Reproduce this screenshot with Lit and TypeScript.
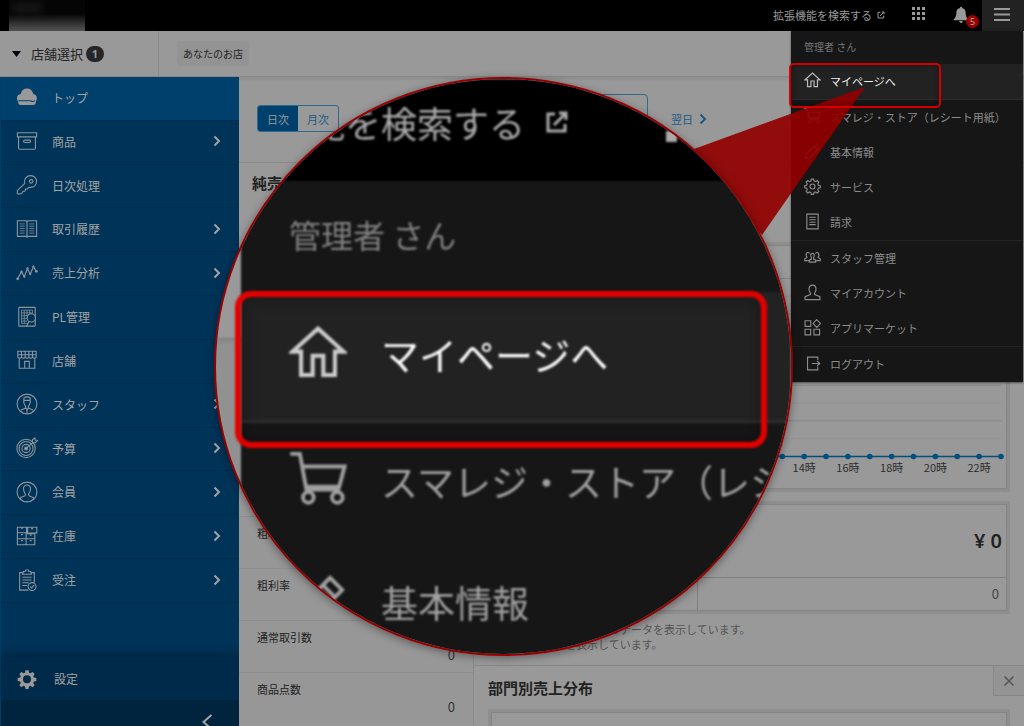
import { LitElement, html, css, svg } from "lit";
import { customElement } from "lit/decorators.js";

const sideIcons: Record<string, unknown> = {
  cloud: svg`<path fill="currentColor" stroke="none" d="M2 16.500C-.2 13 1.500 9 5.200 8.800 6 4.500 9 2.800 12 2.800s6 1.800 6.800 5.800C22.800 9 23.800 13.500 21.800 16.500z"/><path d="M3 16.300h18v1.800q0 2-2 2H5q-2 0-2-2z" fill="currentColor"/><path d="M2.500 16h13.500q2 2 4.500 0" stroke="#00406d" stroke-width="1.100"/>`,
  box: svg`<path d="M1.500 3h21v4.500h-21zM2.800 7.500h18.400V20q0 1-1 1H3.800q-1 0-1-1z"/><rect x="8.200" y="11" width="7.600" height="2.600" rx="1.300"/>`,
  key: svg`<circle cx="16.500" cy="8" r="1.900"/><path d="M9.400 10.500C8.400 5.500 11.500 1.800 16 1.800c4 0 6.500 3 6.500 6.200 0 4.500-3.700 7.400-8.200 6.400l-2 1.800-2 .2-.4 2.300-2.400.4-1.200 2.200-3.800.6-1.200-1 .3-3z"/>`,
  book: svg`<path d="M12 4v17.500M1.500 3h9.500l1 1 1-1h9.500v17H13l-1 1-1-1H1.500z"/><path d="M4 6.500h5.500M4 9h5.500M4 11.500h5.500M4 14h5.500M4 16.500h5.500M14.500 6.500H20M14.500 9H20M14.500 11.500H20M14.500 14H20M14.500 16.500H20" stroke-width=".8"/>`,
  graph: svg`<path d="M2 18l4-7.500 3 5.500 3.500-9 3 6.500L19 5l3 5" stroke-width="1.300"/><g fill="currentColor" stroke="none"><circle cx="1.800" cy="18.300" r="1.500"/><circle cx="6" cy="10.500" r="1.200"/><circle cx="9" cy="16" r="1.200"/><circle cx="12.500" cy="7" r="1.200"/><circle cx="15.500" cy="13" r="1.200"/><circle cx="19" cy="5" r="1.200"/><circle cx="22.200" cy="10.200" r="1.500"/></g>`,
  sheet: svg`<rect x="3" y="1.500" width="18" height="20.500" rx=".8"/><path d="M6 4.500h12M6 4.500V19M6 7.500h12M6 10.500h8M6 13.500h6M6 16.500h6M6 19h7M9 4.500V19M12 4.500v7M15 4.500v5M18 4.500V8" stroke-width=".8"/><circle cx="16.700" cy="13" r="4.500" fill="#003358"/><path d="M14.200 17l-3 5.500"/>`,
  shop: svg`<path d="M2 2.500h20v3.800H2zM2 6.300v2.900q2 1.600 4 0 2 1.600 4 0 2 1.600 4 0 2 1.600 4 0 2 1.600 4 0V6.300M6 2.500v6.700M10 2.500v6.700M14 2.500v6.700M18 2.500v6.700M3.500 10.200V21h17V10.200M9.500 21v-7.500h5V21"/>`,
  staff: svg`<circle cx="12" cy="12" r="10.800"/><path d="M8.500 5.500q3.500-2.500 7 0v4.800q-.8 3.200-2 4.200v1.800l5.300 2.500M8.500 5.500v4.800q.8 3.200 2 4.200v1.800l-5.300 2.500M8.500 8h7M10.500 16.300l1.500 2 1.500-2M12 18.500V22"/>`,
  target: svg`<circle cx="11" cy="12.500" r="10"/><circle cx="11" cy="12.500" r="7.600"/><circle cx="11" cy="12.500" r="4.500"/><circle cx="11" cy="12.500" r="1.500" fill="currentColor"/><path d="M11 12.500l8-7M18 6V3l2.500-2 .4 2.400 2.600.4L21 6.500z"/>`,
  member: svg`<circle cx="12" cy="12" r="10.800"/><path d="M5 20v-2l4.800-2q1-.6.2-2Q8 11 8.200 7.800 8.600 4.300 12 4.300t3.800 3.500Q16 11 14 14q-.8 1.400.2 2l4.800 2v2"/>`,
  stock: svg`<path d="M1.500 2.500h10v6h-10zM1.500 8.500h9.500v6.500H1.500zM1.500 15h9.500v6.500H1.500zM11 15h9.500v6.500H11zM11 9.500h9.500V15H11zM12.700 2.500h10v6.200h-10zM5.500 3.500h2M5.500 10.500h2M5.500 17h2M15 17h2M15 11h2M16.500 4h2"/>`,
  order: svg`<path d="M8 4H4v19h9.500M16 4h4v11M8 2.800h2Q10.200.8 12 .8t2 2h2l.8 3H7.200zM7 9h10M7 12h10M7 15h7M7 18h5"/><circle cx="17.500" cy="19.200" r="4.300"/><path d="M15.500 19.200l1.500 1.500 2.700-3"/>`,
  gear: svg`<path fill="currentColor" stroke="none" fill-rule="evenodd" d="M10.200 1.500h3.600l.6 3 1.700.7 2.600-1.700 2.500 2.500-1.700 2.600.7 1.700 3 .6v3.600l-3 .6-.7 1.700 1.700 2.600-2.500 2.500-2.600-1.700-1.700.7-.6 3h-3.600l-.6-3-1.700-.7-2.600 1.700-2.500-2.500 1.700-2.600-.7-1.700-3-.6v-3.600l3-.6.7-1.700-1.700-2.600 2.500-2.500 2.600 1.700 1.700-.7zM12 7.600a4.800 4.800 0 1 0 0 9.600 4.800 4.800 0 0 0 0-9.600z"/>`,
};

const menuIcons: Record<string, unknown> = {
  home: svg`<path d="M1.500 11L12 1.500 22.500 11h-3.500v9.700h-4.800v-8H9.800v8H5V11z" stroke-width="1.700"/>`,
  cart: svg`<path d="M.5 .8h4L7.200 15.500h14M6 6h17l-2.200 8.300H7"/><circle cx="8" cy="18.800" r="2.200"/><circle cx="20" cy="18.800" r="2.200"/>`,
  pencil: svg`<path d="M2 22l1.500-6.500L17 2l5 5L8.500 20.500zM14 5l5 5"/>`,
  cog: svg`<circle cx="12" cy="12" r="3.500"/><path d="M10.300 1.500h3.400l.6 2.800 2 .8 2.400-1.600 2.300 2.300-1.500 2.400.8 2 2.700.6v3l-2.700.7-.8 2 1.500 2.400-2.300 2.300-2.400-1.600-2 .8-.6 2.700h-3.400l-.6-2.700-2-.8-2.400 1.600L3 18.900l1.500-2.400-.8-2-2.700-.7v-3l2.700-.6.8-2L3 5.800l2.300-2.300 2.400 1.600 2-.8z"/>`,
  bill: svg`<path d="M4 1.500h16v21H4zM7.500 6h9M7.500 9.500h9M7.500 13h9M7.500 16.500h9"/>`,
  group: svg`<path d="M7.500 18.500v-2.700l3-1.500V12q-1-1.200-1-3 0-3 2.500-3T14.500 9q0 1.800-1 3v2.300l3 1.500v2.700zM7 16.500H1v-2.700l3-1.500v-1q-1-1-1-3Q3.200 5 5.500 5q1.800 0 2.300 1.400M17 16.500h6v-2.700l-3-1.500v-1q1-1 1-3Q20.800 5 18.500 5q-1.800 0-2.300 1.400"/>`,
  person: svg`<path d="M1.500 22v-4l7.500-3q.8-1 0-2-2-2.500-2-6 .3-5.500 5-5.500t5 5.500q0 3.500-2 6-.8 1 0 2l7.500 3v4z"/>`,
  apps: svg`<path d="M1.500 2.500h8v8h-8zM1.500 14.500h8v8h-8zM14 14.500h8v8h-8zM18 .8l5.300 5.500L18 11.800l-5.300-5.500z"/>`,
  exit: svg`<path d="M19.500 7V3H5v18h14.500v-4M11 12h11M18.500 8.200l3.700 3.800-3.700 3.800"/>`,
};

const icon = (shape: unknown, cls: string, stroke = "1.200") =>
  html`<svg class=${cls} viewBox="0 0 24 24" fill="none" stroke="currentColor" stroke-width=${stroke} aria-hidden="true">${shape}</svg>`;

const sideItems: [string, string, boolean][] = [
  ["cloud", "トップ", false],
  ["box", "商品", true],
  ["key", "日次処理", false],
  ["book", "取引履歴", true],
  ["graph", "売上分析", true],
  ["sheet", "PL管理", false],
  ["shop", "店舗", false],
  ["staff", "スタッフ", true],
  ["target", "予算", true],
  ["member", "会員", true],
  ["stock", "在庫", true],
  ["order", "受注", true],
];

const menuGroups: [string, string][][] = [
  [
    ["cart", "スマレジ・ストア（レシート用紙）"],
    ["pencil", "基本情報"],
    ["cog", "サービス"],
    ["bill", "請求"],
  ],
  [
    ["group", "スタッフ管理"],
    ["person", "マイアカウント"],
    ["apps", "アプリマーケット"],
  ],
  [["exit", "ログアウト"]],
];

const extShape = svg`<path d="M10 4H3v17h17v-7M9 15L20 4M14 3h7v7" stroke-width="3"/>`;

@customElement("app-root")
export class AppRoot extends LitElement {
  static styles = css`
    :host {
      display: block;
      font-family: "Noto Sans CJK JP", "Noto Sans", sans-serif;
      font-size: 11px;
      color: #222;
    }
    * { box-sizing: border-box; }
    a { color: inherit; text-decoration: none; }
    button { font: inherit; color: inherit; background: none; border: 0; padding: 0; margin: 0; }
    ul, dl, dd, h2, p { margin: 0; padding: 0; list-style: none; }
    svg { display: block; flex: none; }
    .page {
      position: relative;
      display: flex;
      flex-direction: column;
      height: 100vh;
      overflow: hidden;
      background: #999;
    }

    .header { display: flex; align-items: center; height: 31px; flex: none; background: #000; color: #999; }
    .logo {
      width: 76px; height: 31px; margin-left: 9px; overflow: hidden;
      background: linear-gradient(#050505 45%, #181818 58%, #555 100%);
    }
    .logo-mark { width: 30px; height: 8px; margin: 4px 0 0 3px; background: #1c1c1c; filter: blur(4px); }
    .tools { display: flex; align-items: center; margin-left: auto; height: 100%; }
    .search { display: flex; align-items: center; gap: 5px; padding-bottom: 2px; }
    .ext { width: 8px; height: 8px; }
    .grid-btn { margin-left: 26px; padding-bottom: 2px; }
    .grid-icon { width: 17px; height: 17px; }
    .bell { position: relative; margin-left: 24px; padding-bottom: 2px; }
    .bell-icon { width: 18px; height: 18px; }
    .bell-count {
      position: absolute; left: 14px; top: 9px; width: 13px; height: 13px; border-radius: 50%;
      background: #900; color: #aaa; font: 9px/13px "Noto Sans", sans-serif; text-align: center;
    }
    .burger { display: flex; align-items: center; justify-content: center; width: 42px; height: 100%; margin-left: 12px; padding: 0 2px 4px 0; background: #222; }
    .burger-icon { width: 16px; height: 14px; }

    .subbar { display: flex; align-items: center; height: 46px; flex: none; border-bottom: 1px solid #888; box-shadow: 0 1px 4px rgba(0, 0, 0, .12); }
    .store { display: flex; align-items: center; width: 159px; height: 100%; padding-left: 12px; font-size: 13px; border-right: 1px solid #8a8a8a; }
    .tri { width: 9px; height: 6px; margin-right: 10px; color: #000; }
    .store-count { width: 18px; height: 16px; margin-left: 3px; border-radius: 8px; background: #262626; color: #999; font: bold 11px/16px "Noto Sans", sans-serif; text-align: center; }
    .chip { height: 25px; margin-left: 18px; padding: 0 6px; border-radius: 4px; background: #939393; font-size: 10px; line-height: 25px; }

    .body { display: flex; flex: 1; min-height: 0; }
    .side { display: flex; flex-direction: column; width: 239px; flex: none; background: #003358; color: #a3a3a3; font-size: 12px; border-left: 1px solid #003d68; }
    .side-list { display: grid; grid-template-rows: repeat(12, 1fr); height: 526px; flex: none; }
    .side-link { display: flex; align-items: center; height: 100%; padding: 0 18px 2px 15px; gap: 14px; border-bottom: 1px solid #002d4f; }
    .side-link.on { background: #00406d; }
    .side-icon { width: 22px; height: 22px; color: #8c959c; }
    .on .side-icon { color: #999; }
    .chev { width: 8px; height: 12px; margin-left: auto; }
    .settings { display: flex; align-items: center; gap: 17px; height: 43px; flex: none; margin-top: 54px; padding-left: 16px; background: #002a49; box-shadow: 0 -4px 8px rgba(0, 0, 0, .25); }
    .settings-icon { width: 20px; height: 20px; color: #999; }
    .collapse { display: flex; justify-content: flex-end; flex: 1; min-height: 44px; padding: 14px 26px 0 0; background: #00243d; }
    .collapse-icon { width: 12px; height: 16px; }

    .main { flex: 1; min-width: 0; display: flex; flex-direction: column; }
    .toolbar { display: flex; align-items: center; height: 86px; flex: none; padding: 0 0 2px 18px; border-bottom: 1px solid #888; color: #1b5886; }
    .seg { display: flex; width: 82px; height: 27px; border: 1px solid #33698f; border-radius: 3px; overflow: hidden; }
    .seg-btn { flex: 1; }
    .seg-btn.on { background: #00406d; color: #999; }
    .date { width: 228px; height: 50px; margin-left: 81px; border: 1px solid #33698f; border-radius: 4px; }
    .next { display: flex; align-items: center; gap: 6px; margin-left: 23px; }
    .columns { display: flex; flex: 1; min-height: 0; }
    .stats { width: 235px; flex: none; border-right: 1px solid #898989; }
    .title { font-size: 15px; line-height: 22px; font-weight: 700; }
    .stats-title { height: 353px; padding: 9px 13px 0; }
    .stat { height: 52px; padding: 8px 18px 0; border-top: 1px solid #8d8d8d; background: #979797; }
    .stat-name { line-height: 17px; }
    .stat-value { line-height: 18px; font-size: 13px; text-align: right; color: #333; }
    .report { flex: 1; min-width: 0; }
    .sheet { margin: 0 14px; border: 3px solid #8e8e8e; }
    .sheet-in { border: 1px solid #858585; }
    .chart-box { margin-top: 79px; }
    .chart { width: 100%; height: auto; }
    .chart text { font-size: 11px; fill: #2c2c2c; text-anchor: middle; }
    .total-box { margin-top: 9px; }
    .total { height: 72px; padding-right: 4px; text-align: right; font: 600 20px/72px "Noto Sans", sans-serif; }
    .split { display: grid; grid-template-columns: 205px 1fr; height: 33px; border-top: 1px solid #808080; }
    .split-right { border-left: 1px solid #808080; padding-right: 7px; text-align: right; font-size: 13px; line-height: 32px; color: #444; }
    .note { margin: 8px 14px 0; line-height: 15px; color: #555; }
    .dept { margin-top: 13px; border-top: 1px solid #868686; }
    .dept-head { display: flex; justify-content: space-between; height: 43px; padding-left: 14px; }
    .dept-title { padding-top: 11px; }
    .close { display: flex; align-items: center; justify-content: center; width: 31px; height: 30px; border: 1px solid #868686; border-top: 0; border-right: 0; background: #949494; color: #555; }
    .x { width: 10px; height: 10px; }
    .dept-body { height: 40px; }

    .menu { position: absolute; top: 31px; right: 1px; width: 232px; background: #161616; color: #8c8c8c; box-shadow: 0 1px 2px rgba(0, 0, 0, .5); }
    .who { height: 33px; padding-left: 13px; font-size: 10px; line-height: 32px; color: #777; }
    .menu-group + .menu-group { border-top: 1px solid #222; }
    .menu-link { display: flex; align-items: center; gap: 9px; height: 35px; padding: 0 0 2px 13px; white-space: nowrap; }
    .menu-link.on { height: 36px; background: #222; color: #eee; border-bottom: 1px solid #2c2c2c; }
    .menu-icon { width: 17px; height: 17px; }
    .on .menu-icon { color: #bbb; }

    .pointer { position: absolute; left: 690px; top: 80px; width: 180px; height: 160px; }
    .mark { position: absolute; left: 789px; top: 63px; width: 152px; height: 45px; border: 2px solid #d40000; border-radius: 5px; box-shadow: inset 0 0 5px rgba(0, 0, 0, .4); }

    .lens {
      position: absolute; left: 214px; top: 77px; width: 579px; height: 579px; overflow: hidden;
      border: 2px solid #960000; border-radius: 50%;
      background: linear-gradient(#999 257px, #858585 260px, #919191 266px);
      box-shadow: 0 2px 9px rgba(0, 0, 0, .4);
    }
    .zoomed { filter: blur(1px); white-space: nowrap; }
    .z-head { display: flex; align-items: center; height: 102px; padding: 0 114px 17px 0; justify-content: flex-end; background: #000; color: #aaa; font-size: 36px; }
    .z-ext { width: 24px; height: 24px; margin-left: 20px; }
    .z-dot { flex: none; width: 11px; height: 11px; margin: 30px 0 0 97px; background: #aaa; }
    .z-menu { margin-left: 25px; background: #161616; color: #a0a0a0; font-size: 37px; }
    .z-who { height: 111px; padding-left: 48px; font-size: 32px; line-height: 107px; color: #808080; }
    .z-row { display: flex; align-items: center; gap: 34px; height: 121px; padding: 0 0 5px 48px; }
    .z-row.on { height: 131px; background: #222; color: #fff; border-bottom: 3px solid #2d2d2d; font-size: 38px; }
    .z-icon { width: 58px; height: 58px; }
    .on .z-icon { color: #ccc; }
    .z-mark { position: absolute; left: 19px; top: 212px; width: 532px; height: 157px; border: 6px solid #e40000; border-radius: 16px; filter: blur(1px); box-shadow: inset 0 0 16px rgba(0, 0, 0, .35); }
  `;

  private chevron() {
    return html`<svg class="chev" viewBox="0 0 8 12" fill="none" stroke="currentColor" stroke-width="2" aria-hidden="true"><path d="M1.500 1.500L6 6l-4.500 4.500" /></svg>`;
  }

  private chart() {
    const step = 503 / 23;
    const hours = Array.from({ length: 24 }, (_, i) => i);
    return html`<svg class="chart" viewBox="0 0 514 242" role="img" aria-label="時間別売上">
      ${Array.from({ length: 10 }, (_, i) => svg`<path d=${`M6 ${32.5 + i * 17.8}H509`} stroke=${i % 2 ? "#929292" : "#848484"} />`)}
      <path d="M6 210.500H509" stroke="#00507f" stroke-width="1.500" />
      ${hours.map((h) => svg`<circle cx=${6 + h * step} cy="210.500" r="2.800" fill="#00507f" />`)}
      ${hours.filter((h) => h >= 14 && h % 2 === 0).map((h) => svg`<text x=${6 + h * step} y="226">${h}時</text>`)}
    </svg>`;
  }

  render() {
    return html`<div class="page">
      <header class="header">
        <div class="logo"><div class="logo-mark"></div></div>
        <div class="tools">
          <a class="search" href="#">拡張機能を検索する${icon(extShape, "ext")}</a>
          <button class="grid-btn" aria-label="アプリ">
            <svg class="grid-icon" viewBox="0 0 17 17" fill="currentColor">
              ${[1, 6, 11].map((y) => [1, 6, 11].map((x) => svg`<rect x=${x} y=${y} width="3" height="3" />`))}
            </svg>
          </button>
          <button class="bell" aria-label="お知らせ">
            <svg class="bell-icon" viewBox="0 0 24 24" fill="currentColor"><path d="M12 1q1.500 0 1.500 1.800 4.700 1.200 4.700 6.200 0 6 3.300 8.500v1.500h-19v-1.500Q5.800 15 5.800 9q0-5 4.700-6.200Q10.500 1 12 1zM9.500 20h5q-.5 2.500-2.500 2.500T9.500 20z" /></svg>
            <span class="bell-count">5</span>
          </button>
          <button class="burger" aria-label="メニュー">
            <svg class="burger-icon" viewBox="0 0 16 14" stroke="currentColor" stroke-width="2"><path d="M0 2h16M0 7.500h16M0 13h16" /></svg>
          </button>
        </div>
      </header>

      <div class="subbar">
        <button class="store">
          <svg class="tri" viewBox="0 0 9 6" fill="currentColor"><path d="M0 0h9L4.500 6z" /></svg>
          店舗選択<span class="store-count">1</span>
        </button>
        <span class="chip">あなたのお店</span>
      </div>

      <div class="body">
        <nav class="side">
          <ul class="side-list">
            ${sideItems.map(
              ([key, label, more], i) => html`<li><a class="side-link ${i === 0 ? "on" : ""}" href="#">${icon(sideIcons[key], "side-icon")}${label}${more ? this.chevron() : ""}</a></li>`
            )}
          </ul>
          <a class="settings" href="#">${icon(sideIcons.gear, "settings-icon")}設定</a>
          <button class="collapse" aria-label="閉じる">
            <svg class="collapse-icon" viewBox="0 0 12 16" fill="none" stroke="currentColor" stroke-width="2"><path d="M10.500 1L2.500 8l8 7" /></svg>
          </button>
        </nav>

        <main class="main">
          <div class="toolbar">
            <div class="seg"><button class="seg-btn on">日次</button><button class="seg-btn">月次</button></div>
            <button class="date" aria-label="日付"></button>
            <a class="next" href="#">翌日${this.chevron()}</a>
          </div>
          <div class="columns">
            <section class="stats">
              <div class="stats-title"><h2 class="title">純売上</h2></div>
              <dl>
                ${["粗利", "粗利率", "通常取引数", "商品点数"].map(
                  (n) => html`<div class="stat"><dt class="stat-name">${n}</dt><dd class="stat-value">0</dd></div>`
                )}
              </dl>
            </section>
            <section class="report">
              <div class="sheet chart-box"><div class="sheet-in">${this.chart()}</div></div>
              <div class="sheet total-box">
                <div class="sheet-in">
                  <div class="total">¥ 0</div>
                  <div class="split"><div></div><div class="split-right">0</div></div>
                </div>
              </div>
              <p class="note">※前日の営業終了時までのデータを表示しています。<br />※税抜きの金額を表示しています。</p>
              <div class="dept">
                <div class="dept-head">
                  <h2 class="title dept-title">部門別売上分布</h2>
                  <button class="close" aria-label="閉じる"><svg class="x" viewBox="0 0 10 10" stroke="currentColor" stroke-width="1.500"><path d="M.5.5l9 9M9.500.5l-9 9" /></svg></button>
                </div>
                <div class="sheet"><div class="sheet-in dept-body"></div></div>
              </div>
            </section>
          </div>
        </main>
      </div>

      <nav class="menu">
        <p class="who">管理者 さん</p>
        <a class="menu-link on" href="#">${icon(menuIcons.home, "menu-icon")}マイページへ</a>
        ${menuGroups.map(
          (g) => html`<div class="menu-group">${g.map(([key, label]) => html`<a class="menu-link" href="#">${icon(menuIcons[key], "menu-icon", "1.600")}${label}</a>`)}</div>`
        )}
      </nav>

      <svg class="pointer" viewBox="0 0 180 160"><path d="M175 7L4 69l68 86z" fill="#910000" fill-opacity=".92" /></svg>
      <div class="mark"></div>

      <div class="lens" aria-hidden="true">
        <div class="zoomed">
          <div class="z-head">拡張機能を検索する${icon(extShape, "z-ext")}<span class="z-dot"></span></div>
          <div class="z-menu">
            <div class="z-who">管理者 さん</div>
            <div class="z-row on">${icon(menuIcons.home, "z-icon")}マイページへ</div>
            <div class="z-row">${icon(menuIcons.cart, "z-icon", "1.600")}スマレジ・ストア（レシート用紙）</div>
            <div class="z-row">${icon(menuIcons.pencil, "z-icon", "1.600")}基本情報</div>
          </div>
        </div>
        <div class="z-mark"></div>
      </div>
    </div>`;
  }
}
